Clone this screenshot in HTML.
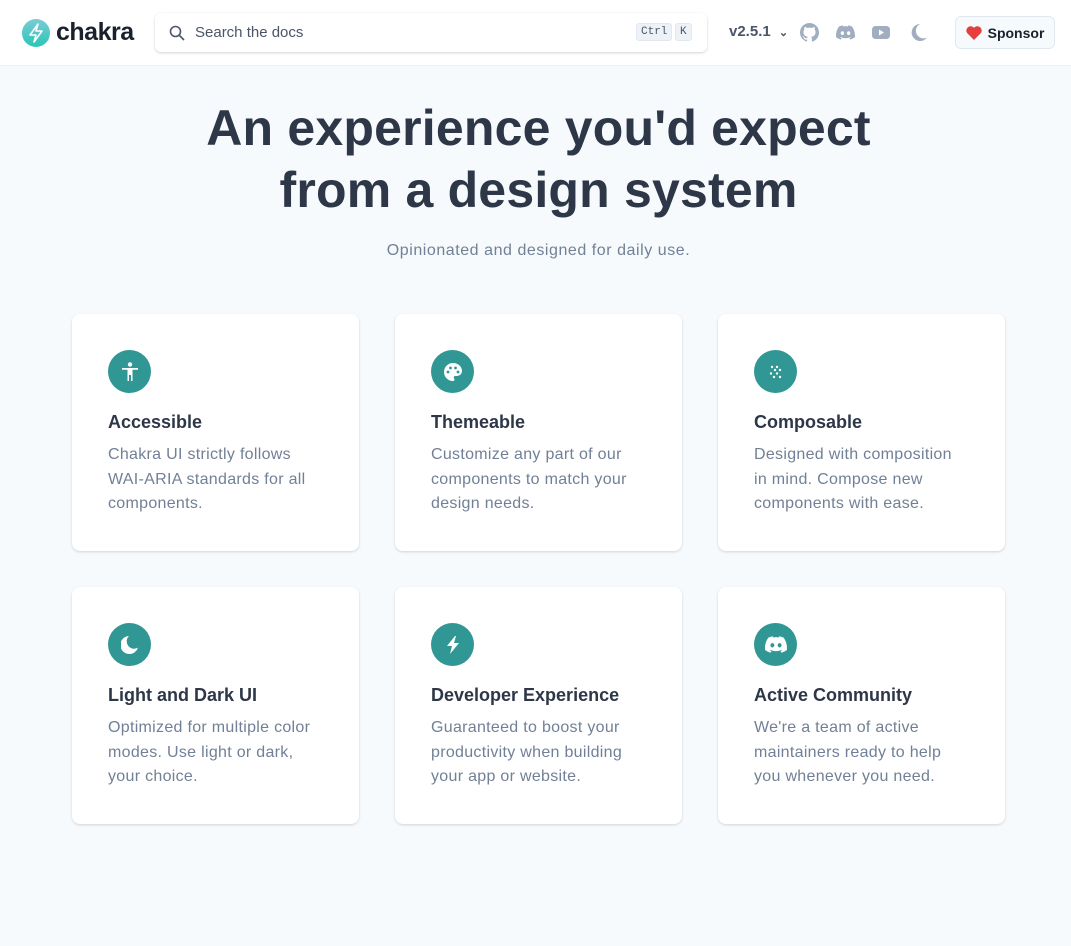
<!DOCTYPE html>
<html><head><meta charset="utf-8"><style>
*{box-sizing:border-box;margin:0;padding:0}
body{width:1071px;height:946px;background:#f7fafc;font-family:"Liberation Sans",sans-serif;color:#2d3748;position:relative;overflow:hidden}
header{position:absolute;left:0;top:0;width:1071px;height:66px;background:#fff;border-bottom:1px solid #edf2f7}
.logo{position:absolute;left:22px;top:18px;display:flex;align-items:center}
.logo span{font-size:25px;font-weight:700;margin-left:6px;letter-spacing:-0.5px;color:#1a202c}
.search{position:absolute;left:155px;top:13px;width:552px;height:39px;border-radius:6px;background:#fff;box-shadow:0 1px 3px rgba(0,0,0,.12),0 1px 2px rgba(0,0,0,.06);}
.search .t{position:absolute;left:40px;top:11px;font-size:15px;color:#4a5568}
.kbd{position:absolute;top:10px;height:18px;background:#edf2f7;border:1px solid #e2e8f0;border-radius:3px;font-family:"Liberation Mono",monospace;font-size:11px;line-height:16px;padding:0 4px;color:#4a5568}
.ver{position:absolute;left:729px;top:23px;font-size:15px;font-weight:700;color:#4a5568}
.ic{position:absolute;top:23px}
.sp{position:absolute;left:955px;top:16px;width:100px;height:33px;border:1px solid #e2e8f0;border-radius:6px;background:#f7fafc;font-size:14px;font-weight:700;color:#1a202c;display:flex;align-items:center;justify-content:center;gap:6px}
h1{position:absolute;left:0;top:97px;width:1077px;text-align:center;font-size:50px;line-height:62px;font-weight:700;letter-spacing:0.2px;color:#2d3748}
.sub{position:absolute;left:0;top:242px;width:1077px;text-align:center;font-size:16px;color:#718096;letter-spacing:0.55px}
.card{position:absolute;width:287px;height:237px;background:#fff;border-radius:8px;box-shadow:0 1px 3px rgba(0,0,0,.1),0 1px 2px rgba(0,0,0,.06);padding:36px}
.circ{width:43px;height:43px;border-radius:50%;background:#319795;display:flex;align-items:center;justify-content:center}
.card h3{font-size:18px;font-weight:700;margin-top:17px;line-height:24px;color:#2d3748}
.card p{font-size:16px;line-height:24.5px;color:#718096;margin-top:9px;white-space:nowrap;letter-spacing:0.3px}
</style></head><body>
<header>
<div class="logo"><svg width="28" height="28" viewBox="0 0 28 28"><defs><linearGradient id="g" x1="0" y1="0" x2="0" y2="1"><stop offset="0" stop-color="#7bcbd4"/><stop offset="1" stop-color="#29c6b7"/></linearGradient></defs><circle cx="14" cy="14" r="14" fill="url(#g)"/><path d="M16 5L8 16h6l-2 7 8-11h-6z" fill="none" stroke="#fff" stroke-width="1.6" stroke-linejoin="round"/></svg><span>chakra</span></div>
<div class="search"><svg style="position:absolute;left:14px;top:12px" width="16" height="16" viewBox="0 0 16 16"><circle cx="6.5" cy="6.5" r="5" fill="none" stroke="#4a5568" stroke-width="1.6"/><path d="M10.5 10.5L15 15" stroke="#4a5568" stroke-width="1.6"/></svg><div class="t">Search the docs</div><div class="kbd" style="left:481px">Ctrl</div><div class="kbd" style="left:520px">K</div></div>
<div class="ver">v2.5.1 <span style="font-size:11px;margin-left:4px">&#8964;</span></div>
<svg class="ic" style="left:800px" width="19" height="19" viewBox="0 0 16 16"><path fill="#a0aec0" d="M8 0C3.58 0 0 3.58 0 8c0 3.54 2.29 6.53 5.47 7.59.4.07.55-.17.55-.38v-1.33c-2.23.48-2.7-1.08-2.7-1.08-.36-.92-.89-1.17-.89-1.17-.73-.5.06-.49.06-.49.8.06 1.23.83 1.23.83.71 1.22 1.87.87 2.33.66.07-.52.28-.87.51-1.07-1.78-.2-3.65-.89-3.65-3.95 0-.87.31-1.59.82-2.15-.08-.2-.36-1.02.08-2.12 0 0 .67-.21 2.2.82a7.6 7.6 0 014 0c1.53-1.04 2.2-.82 2.2-.82.44 1.1.16 1.92.08 2.12.51.56.82 1.27.82 2.15 0 3.07-1.87 3.75-3.65 3.95.29.25.54.73.54 1.48v2.2c0 .21.15.46.55.38A8.01 8.01 0 0016 8c0-4.42-3.58-8-8-8z"/></svg>
<svg class="ic" style="left:836px;top:25px" width="19" height="15" viewBox="0 0 20 15"><path fill="#a0aec0" d="M17 1.3A16 16 0 0013 0l-.5 1a15 15 0 00-5 0L7 0a16 16 0 00-4 1.3C.4 5.1-.3 8.8.1 12.5A16 16 0 005 15l1-1.6a10 10 0 01-1.6-.8l.4-.3a11.5 11.5 0 0010.4 0l.4.3-1.6.8 1 1.6a16 16 0 004.9-2.5c.4-4.3-.7-8-3-11.2zM6.7 10.2c-1 0-1.8-.9-1.8-2s.8-2 1.8-2 1.8.9 1.8 2-.8 2-1.8 2zm6.6 0c-1 0-1.8-.9-1.8-2s.8-2 1.8-2 1.8.9 1.8 2-.8 2-1.8 2z"/></svg>
<svg class="ic" style="left:872px;top:26px" width="18" height="13" viewBox="0 0 18 13"><rect width="18" height="13" rx="3.5" fill="#a0aec0"/><path d="M7 3.5v6l5-3z" fill="#fff"/></svg>
<svg class="ic" style="left:911px;top:24px" width="16" height="17" viewBox="0 0 16 17"><path fill="#a0aec0" d="M9 0a8.5 8.5 0 107 13.5A7 7 0 019 0z"/></svg>
<div class="sp"><svg width="16" height="14" viewBox="0 0 16 14"><path fill="#e53e3e" d="M8 14L1.3 7.3A4 4 0 018 1.8a4 4 0 016.7 5.5z"/></svg>Sponsor</div>
</header>
<h1>An experience you'd expect<br>from a design system</h1>
<div class="sub">Opinionated and designed for daily use.</div>

<div class="card" style="left:72px;top:314px"><div class="circ"><svg width="18" height="20" viewBox="0 0 18 20"><circle cx="9" cy="2.5" r="2.2" fill="#fff"/><path d="M1 6h16v1.8h-5.5V19H10v-6H8v6H6.5V7.8H1z" fill="#fff"/></svg></div><h3>Accessible</h3><p>Chakra UI strictly follows<br>WAI-ARIA standards for all<br>components.</p></div>
<div class="card" style="left:395px;top:314px"><div class="circ"><svg width="20" height="20" viewBox="0 0 20 20"><path fill="#fff" d="M10 1a9 9 0 000 18c1 0 1.5-.7 1.5-1.5 0-.4-.2-.7-.4-1-.2-.3-.4-.6-.4-1 0-.8.7-1.5 1.5-1.5H14a5 5 0 005-5C19 4.6 15 1 10 1z"/><circle cx="5" cy="10" r="1.4" fill="#319795"/><circle cx="7.5" cy="6" r="1.4" fill="#319795"/><circle cx="12.5" cy="6" r="1.4" fill="#319795"/><circle cx="15" cy="10" r="1.4" fill="#319795"/></svg></div><h3>Themeable</h3><p>Customize any part of our<br>components to match your<br>design needs.</p></div>
<div class="card" style="left:718px;top:314px"><div class="circ"><svg width="14" height="14" viewBox="0 0 14 14" fill="#fff"><circle cx="3" cy="2" r="1.2"/><circle cx="8" cy="2" r="1.2"/><circle cx="11" cy="5" r="1.2"/><circle cx="6" cy="5" r="1.2"/><circle cx="2" cy="8.5" r="1.2"/><circle cx="8" cy="8.5" r="1.2"/><circle cx="11" cy="12" r="1.2"/><circle cx="5" cy="12" r="1.2"/></svg></div><h3>Composable</h3><p>Designed with composition<br>in mind. Compose new<br>components with ease.</p></div>
<div class="card" style="left:72px;top:587px"><div class="circ"><svg width="18" height="18" viewBox="0 0 16 17"><path fill="#fff" d="M7 0a8.5 8.5 0 108.5 11A7 7 0 017 0z"/></svg></div><h3>Light and Dark UI</h3><p>Optimized for multiple color<br>modes. Use light or dark,<br>your choice.</p></div>
<div class="card" style="left:395px;top:587px"><div class="circ"><svg width="16" height="18" viewBox="0 0 16 18"><path fill="#fff" d="M10 0L2 10h5l-2 8 9-11H9l2-7z"/></svg></div><h3>Developer Experience</h3><p>Guaranteed to boost your<br>productivity when building<br>your app or website.</p></div>
<div class="card" style="left:718px;top:587px"><div class="circ"><svg width="22" height="17" viewBox="0 0 20 15"><path fill="#fff" d="M17 1.3A16 16 0 0013 0l-.5 1a15 15 0 00-5 0L7 0a16 16 0 00-4 1.3C.4 5.1-.3 8.8.1 12.5A16 16 0 005 15l1-1.6a10 10 0 01-1.6-.8l.4-.3a11.5 11.5 0 0010.4 0l.4.3-1.6.8 1 1.6a16 16 0 004.9-2.5c.4-4.3-.7-8-3-11.2zM6.7 10.2c-1 0-1.8-.9-1.8-2s.8-2 1.8-2 1.8.9 1.8 2-.8 2-1.8 2zm6.6 0c-1 0-1.8-.9-1.8-2s.8-2 1.8-2 1.8.9 1.8 2-.8 2-1.8 2z"/></svg></div><h3>Active Community</h3><p>We're a team of active<br>maintainers ready to help<br>you whenever you need.</p></div>
</body></html>
